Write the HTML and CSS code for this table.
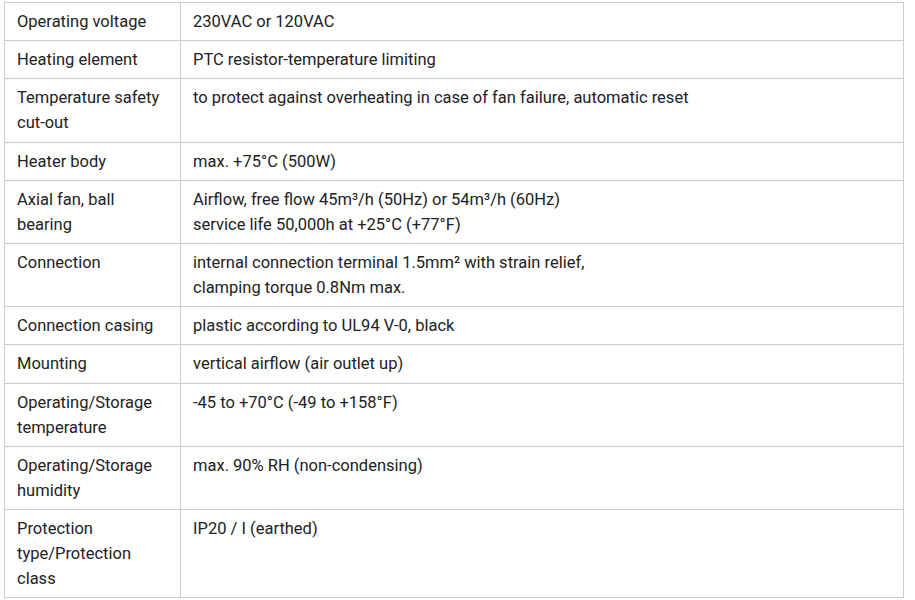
FILE: index.html
```html
<!DOCTYPE html>
<html>
<head>
<meta charset="utf-8">
<link rel="stylesheet" href="styles.css">
</head>
<body>
<table class="specs">
<tr><td class="k">Operating voltage</td><td>230VAC or 120VAC</td></tr>
<tr><td class="k">Heating element</td><td>PTC resistor-temperature limiting</td></tr>
<tr><td class="k">Temperature safety cut-out</td><td>to protect against overheating in case of fan failure, automatic reset</td></tr>
<tr><td class="k">Heater body</td><td>max. +75°C (500W)</td></tr>
<tr><td class="k">Axial fan, ball bearing</td><td>Airflow, free flow 45m³/h (50Hz) or 54m³/h (60Hz)<br>service life 50,000h at +25°C (+77°F)</td></tr>
<tr><td class="k">Connection</td><td>internal connection terminal 1.5mm² with strain relief,<br>clamping torque 0.8Nm max.</td></tr>
<tr><td class="k">Connection casing</td><td>plastic according to UL94 V-0, black</td></tr>
<tr><td class="k">Mounting</td><td>vertical airflow (air outlet up)</td></tr>
<tr><td class="k">Operating/Storage temperature</td><td>-45 to +70°C (-49 to +158°F)</td></tr>
<tr><td class="k">Operating/Storage humidity</td><td>max. 90% RH (non-condensing)</td></tr>
<tr><td class="k">Protection type/Protection class</td><td>IP20 / I (earthed)</td></tr>
</table>
</body>
</html>
```
FILE: styles.css
```css
html, body { margin: 0; padding: 0; background: #fff; }
body { padding: 2px 0 0 4px; font-family: Roboto, "Liberation Sans", sans-serif; font-size: 16.5px; color: #222; }
.specs { border-collapse: collapse; width: 900px; }
.specs td { border: 1px solid #ccc; padding: 6.1px 12px; line-height: 25px; vertical-align: top; text-align: left; }
.specs td.k { width: 151px; }
```
